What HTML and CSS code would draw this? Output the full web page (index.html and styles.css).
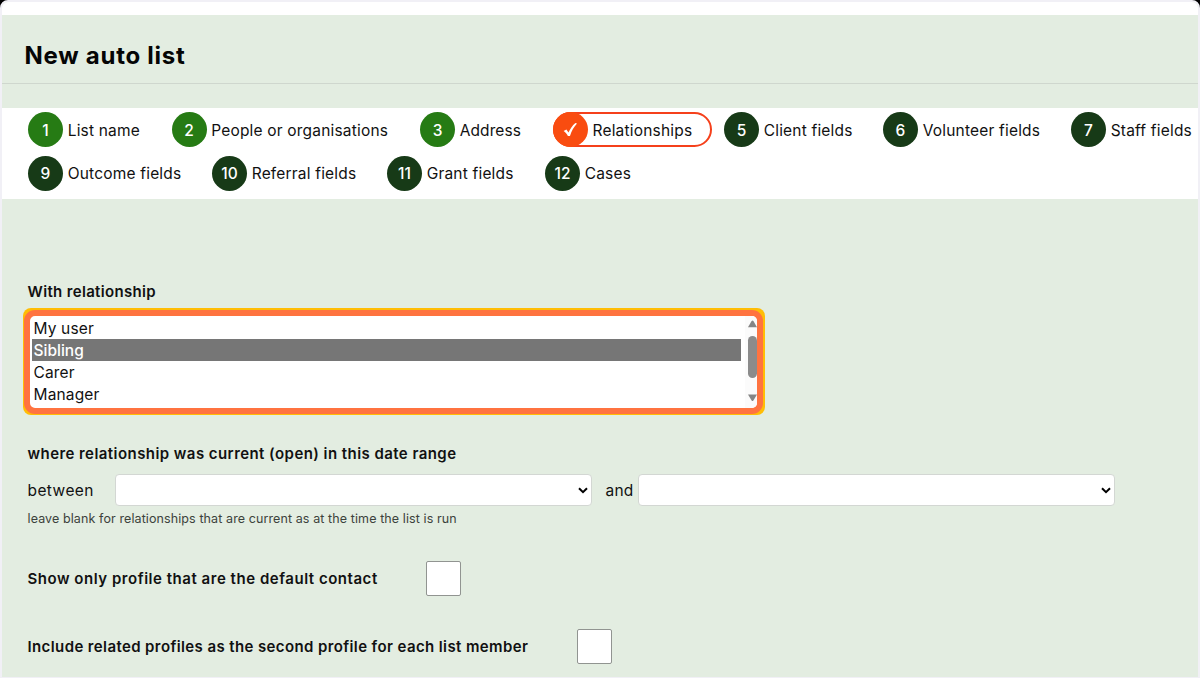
FILE: index.html
```html
<!DOCTYPE html>
<html lang="en">
<head>
<meta charset="utf-8">
<title>New auto list</title>
<link rel="stylesheet" href="styles.css">
</head>
<body>
<div class="frame">
  <header class="page-header"><h1>New auto list</h1></header>
  <nav class="steps">
    <div class="steps-row">
      <div class="step done w-name"><span class="num">1</span><span class="label">List name</span></div>
      <div class="step done w-people"><span class="num">2</span><span class="label">People or organisations</span></div>
      <div class="step done w-address"><span class="num">3</span><span class="label tight">Address</span></div>
      <div class="step current w-relationships"><span class="num"><svg width="16" height="16" viewBox="0 0 16 16"><path d="M.6 9 3.4 7.6 5.5 10.6C7 7 9.3 3.6 12.4 1L14 1.6C10.9 5 8.6 9 7 14H4.9C3.9 12 2.4 10.2.6 9Z" fill="#fff"/></svg></span><span class="label">Relationships</span></div>
      <div class="step w-client"><span class="num">5</span><span class="label">Client fields</span></div>
      <div class="step w-volunteer"><span class="num">6</span><span class="label">Volunteer fields</span></div>
      <div class="step w-staff"><span class="num">7</span><span class="label">Staff fields</span></div>
    </div>
    <div class="steps-row">
      <div class="step w-outcome"><span class="num">9</span><span class="label">Outcome fields</span></div>
      <div class="step w-referral"><span class="num">10</span><span class="label">Referral fields</span></div>
      <div class="step w-grant"><span class="num">11</span><span class="label">Grant fields</span></div>
      <div class="step w-cases"><span class="num">12</span><span class="label">Cases</span></div>
    </div>
  </nav>
  <main class="form">
    <div class="field-title t-with">With relationship</div>
    <div class="highlight">
      <div class="listbox">
        <ul class="options">
          <li>My user</li>
          <li class="selected">Sibling</li>
          <li>Carer</li>
          <li>Manager</li>
        </ul>
        <div class="scrollbar">
          <svg width="9" height="8" viewBox="0 0 9 8"><path d="M0 7.2 3.6 1Q4.5 0 5.4 1L9 7.2Z" fill="#858585"/></svg>
          <div class="thumb"></div>
          <svg width="9" height="8" viewBox="0 0 9 8"><path d="M0 .5 3.6 6.5Q4.5 7.6 5.4 6.5L9 .5Z" fill="#858585"/></svg>
        </div>
      </div>
    </div>
    <div class="field-title t-where">where relationship was current (open) in this date range</div>
    <div class="range">
      <span class="between">between</span>
      <div class="select"><svg width="10" height="7" viewBox="0 0 10 7"><path d="M1 1.2 5 5.2 9 1.2" fill="none" stroke="#000" stroke-width="2"/></svg></div>
      <span class="and">and</span>
      <div class="select"><svg width="10" height="7" viewBox="0 0 10 7"><path d="M1 1.2 5 5.2 9 1.2" fill="none" stroke="#000" stroke-width="2"/></svg></div>
    </div>
    <div class="hint">leave blank for relationships that are current as at the time the list is run</div>
    <div class="check-row"><span class="check-label t-show">Show only profile that are the default contact</span><span class="box"></span></div>
    <div class="check-row second"><span class="check-label t-include">Include related profiles as the second profile for each list member</span><span class="box"></span></div>
  </main>
</div>
</body>
</html>
```
FILE: styles.css
```css
* { box-sizing: border-box; }
body { margin: 0; background: #000; font-family: Inter, "Liberation Sans", sans-serif; font-size: 15.5px; color: #111; }
.frame { width: 1200px; height: 678px; overflow: hidden; background: #e3ede1; border: 2px solid #f1f0f6; border-bottom-width: 1px; border-radius: 8px 8px 0 0; white-space: nowrap; }
.page-header { height: 82px; border-top: 13px solid #fff; border-bottom: 1px solid #cfd7ce; padding: 24px 0 0 22.5px; }
h1 { margin: 0; font-size: 24px; line-height: 34px; font-weight: 700; color: #050505; letter-spacing: .74px; }
.steps { height: 91px; margin-top: 24px; background: #fff; padding: 4px 0 0 26px; }
.steps-row { display: flex; height: 43.5px; }
.step { display: flex; flex: none; height: 35px; align-items: center; }
.num { display: flex; flex: none; width: 35px; height: 35px; margin-right: 4.7px; border-radius: 50%; background: #173a17; color: #fff; align-items: center; justify-content: center; font-weight: 500; padding-top: 1px; }
.done .num { background: #267b14; }
.label { padding-top: 1.5px; letter-spacing: .19px; }
.tight { letter-spacing: .1px; }
.w-name { width: 143.5px; }
.w-people { width: 248.5px; }
.w-address { width: 133px; }
.w-relationships { width: 159px; margin-right: 12px; }
.w-client { width: 159px; }
.w-volunteer { width: 188px; }
.w-staff { width: 130px; }
.w-outcome { width: 184px; }
.w-referral { width: 175px; }
.w-grant { width: 158px; }
.current { border: 2px solid #f5401b; border-radius: 18px; }
.current .num { background: #f94c10; margin-left: -2px; margin-right: 4.5px; }
.form { padding-left: 25.5px; }
.field-title { font-weight: 600; line-height: 20px; font-size: 15px; }
.t-with { margin-top: 83px; letter-spacing: .34px; }
.highlight { width: 742px; height: 107px; margin: 6px 0 0 -4.5px; background: #ffbd05; border-radius: 8px; padding: 1.5px 0 0 1px; }
.listbox { width: 739px; height: 104px; display: flex; justify-content: space-between; border: 6px solid #ff7340; border-radius: 11px; background: #fff; overflow: hidden; }
.options { list-style: none; margin: 1px 0 0 2px; padding: 0; width: 709px; }
.options li { height: 22.2px; line-height: 23.5px; padding-left: 2px; letter-spacing: .15px; }
.options .selected { background: #767676; color: #fff; font-weight: 500; letter-spacing: 0; }
.scrollbar { width: 12px; height: 92px; padding: 4.5px 0 4px 3px; display: flex; flex-direction: column; background: #fbfbfb; }
.scrollbar svg { flex: none; }
.thumb { width: 9px; height: 42px; margin: 8px 0 16px; border-radius: 4.5px; background: #8b8b8b; }
.highlight { margin-left: -5px; }
.t-where { margin-top: 29px; letter-spacing: .44px; }
.range { display: flex; height: 32px; margin-top: 10px; align-items: center; }
.between { width: 87.5px; letter-spacing: .42px; }
.select { display: flex; width: 477px; height: 32px; padding-right: 3px; align-items: center; justify-content: flex-end; border: 1px solid #d3d7d3; border-radius: 4px; background: #fff; }
.and { width: 45.5px; padding-left: 13.5px; letter-spacing: .2px; }
.hint { margin-top: 5px; line-height: 16px; font-size: 12.5px; color: #3c423c; letter-spacing: .1px; }
.check-row { display: flex; height: 36px; margin-top: 33px; align-items: center; }
.second { margin-top: 32px; }
.check-label { font-weight: 600; font-size: 15px; }
.t-show { width: 398.5px; letter-spacing: .53px; }
.t-include { width: 549.5px; letter-spacing: .39px; }
.box { width: 35px; height: 35px; background: #fff; border: 1px solid #919491; border-radius: 2px; }
```
